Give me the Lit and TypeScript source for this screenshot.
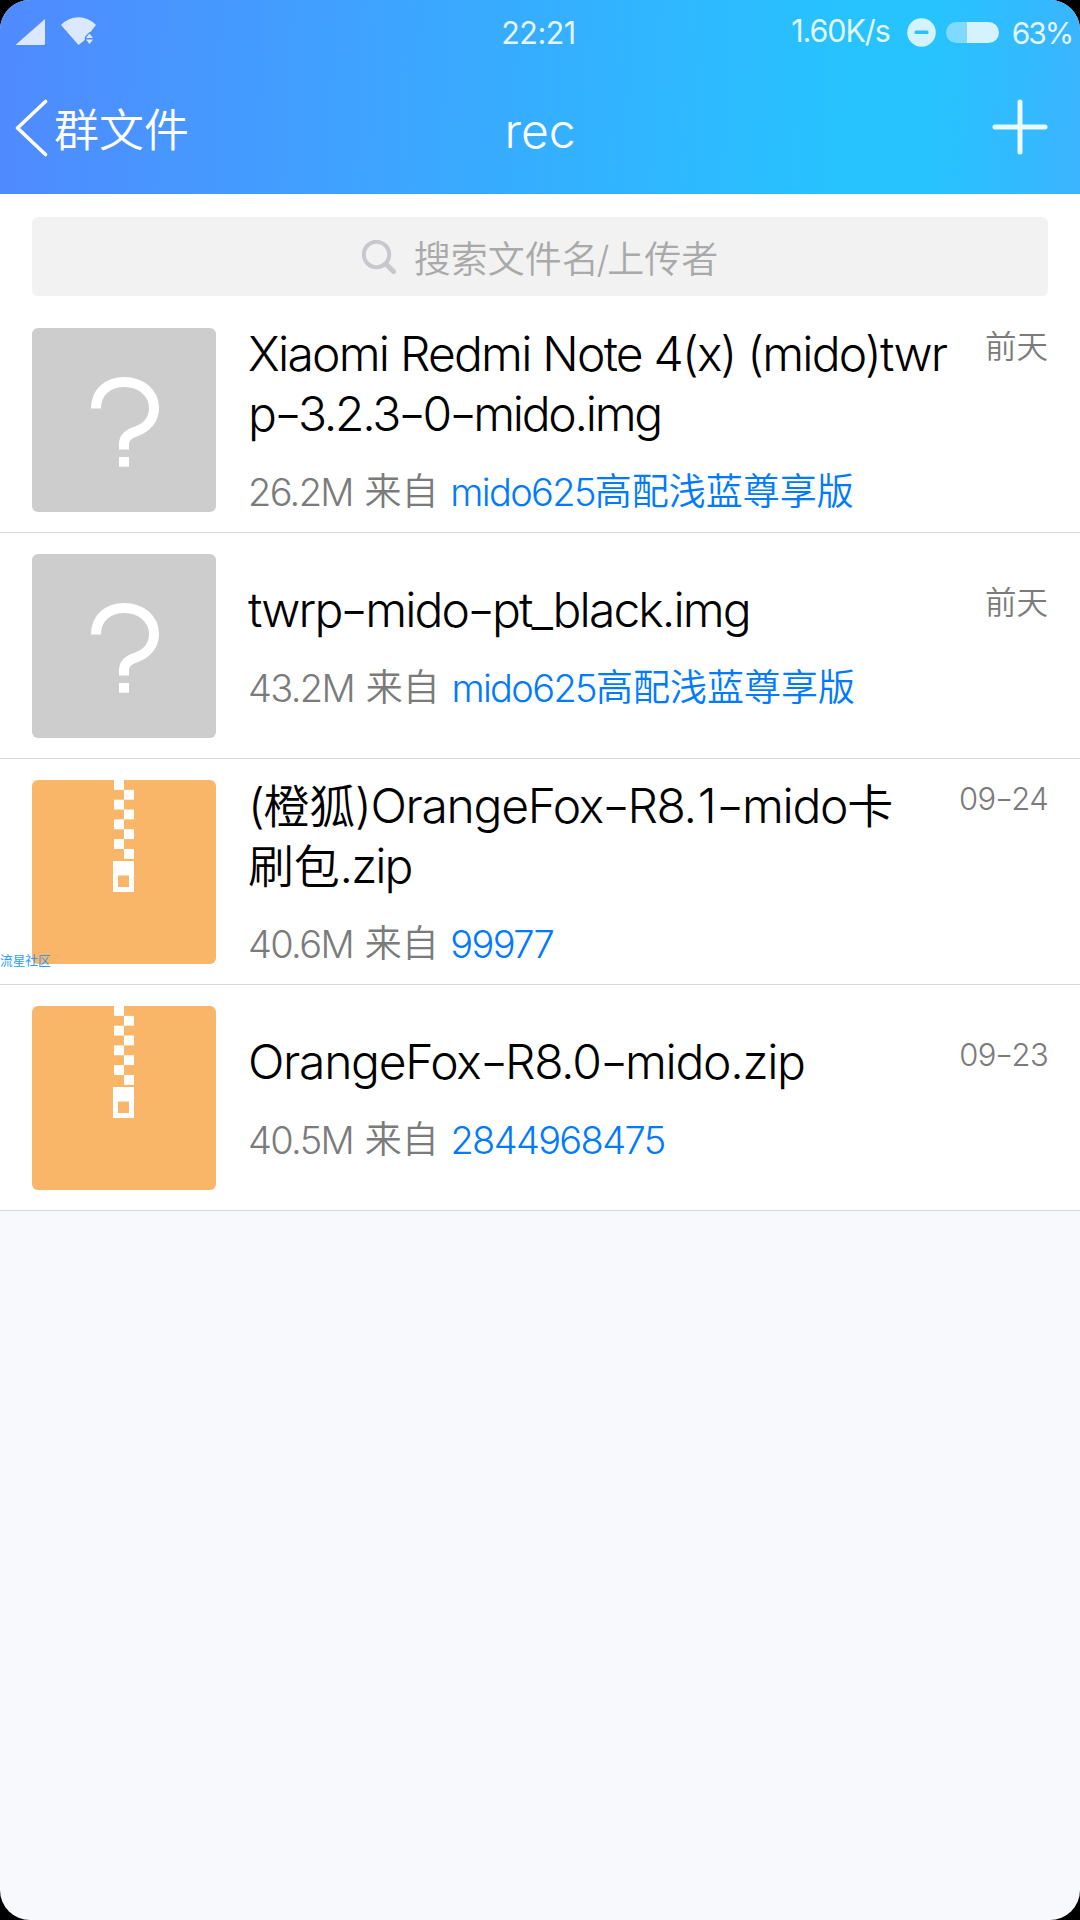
import { LitElement, html, css, svg } from "lit";
import { customElement, property } from "lit/decorators.js";
import { styleMap } from "lit/directives/style-map.js";

interface NameLine {
  text: string;
  /** letter spacing, px */
  tracking: number;
}

interface FileEntry {
  kind: "unknown" | "zip";
  lines: NameLine[];
  size: string;
  from: string;
  date: string;
}

const FILES: FileEntry[] = [
  {
    kind: "unknown",
    lines: [
      { text: "Xiaomi Redmi Note 4(x) (mido)twr", tracking: -1.78 },
      { text: "p-3.2.3-0-mido.img", tracking: -2.3 },
    ],
    size: "26.2M",
    from: "mido625高配浅蓝尊享版",
    date: "前天",
  },
  {
    kind: "unknown",
    lines: [{ text: "twrp-mido-pt_black.img", tracking: -1.9 }],
    size: "43.2M",
    from: "mido625高配浅蓝尊享版",
    date: "前天",
  },
  {
    kind: "zip",
    lines: [
      { text: "(橙狐)OrangeFox-R8.1-mido卡", tracking: -1.3 },
      { text: "刷包.zip", tracking: -2 },
    ],
    size: "40.6M",
    from: "99977",
    date: "09-24",
  },
  {
    kind: "zip",
    lines: [{ text: "OrangeFox-R8.0-mido.zip", tracking: -1.3 }],
    size: "40.5M",
    from: "2844968475",
    date: "09-23",
  },
];

const SPECIAL: Record<string, string> = { "-": "dash", "/": "slash", "1": "one" };

/** Wraps runs of Han characters, hyphens, slashes and the digit 1 in spans of their own. */
const runs = (text: string) =>
  text
    .split(/([\u4e00-\u9fff]+|-|\/|1)/)
    .filter((part) => part !== "")
    .map((part) => {
      const cls = SPECIAL[part] ?? (/[\u4e00-\u9fff]/.test(part) ? "han" : "");
      return cls ? html`<span class=${cls}>${part}</span>` : part;
    });

const teeth = Array.from({ length: 8 }, (_, i) =>
  svg`<rect x=${i % 2 ? 92 : 82} y=${i * 9.85} width="10" height="9.85"></rect>`,
);

@customElement("file-thumb")
class FileThumb extends LitElement {
  @property() kind = "unknown";

  static styles = css`
    :host { display: block; flex: none; width: 184px; height: 184px; }
    svg { display: block; border-radius: 6px; }
    .unknown { background: #cdcdcd; }
    .zip { background: #f9b568; }
  `;

  render() {
    return this.kind === "zip"
      ? html`<svg class="zip" width="184" height="184" viewBox="0 0 184 184" fill="#fff">
          ${teeth}
          <path fill-rule="evenodd" d="M81 81h21v31H81zM86 95.500v11.500h11v-11.500z"></path>
        </svg>`
      : html`<svg class="unknown" width="184" height="184" viewBox="0 0 184 184">
          <path d="M64 80.500C64 64 76 54 92.500 54S122 65 122 80C122 92 114 100 104 103.500C96 106 92 110 92 116V121.500" fill="none" stroke="#fff" stroke-width="10"></path>
          <rect x="87" y="129" width="10" height="9.700" fill="#fff"></rect>
        </svg>`;
  }
}

@customElement("file-row")
class FileRow extends LitElement {
  @property({ attribute: false }) file!: FileEntry;

  static styles = css`
    :host {
      display: flex; align-items: flex-start; gap: 32px; box-sizing: border-box; height: 226px;
      padding: 21px 32px 0; border-bottom: 1px solid #d9d9db; background: #fff;
    }
    .body { flex: 1; height: 182px; display: flex; flex-direction: column; justify-content: center; gap: 25px; white-space: nowrap; }
    .head { display: flex; justify-content: space-between; align-items: flex-start; }
    .name { font-size: 48px; line-height: 60px; font-weight: 300; color: #000; }
    .line { height: 60px; }
    .dash { display: inline-block; transform: scaleX(1.3); margin: 0 0.042em; }
    .one { margin: 0 0.042em; }
    .name .han { font-size: 46px; letter-spacing: -0.2px; line-height: 1; font-weight: 350; }
    .date { font-size: 31px; line-height: 40px; margin-top: 3px; color: #7b7b7b; font-weight: 300; letter-spacing: -0.7px; }
    .date .han { font-size: 31.500px; letter-spacing: 0; line-height: 1; font-weight: 350; }
    .meta { font-size: 38px; line-height: 46px; height: 46px; color: #7b7b7b; font-weight: 300; letter-spacing: -1.65px; word-spacing: 2.600px; }
    .meta .han { font-size: 37px; letter-spacing: 0; line-height: 1; font-weight: 350; vertical-align: 1px; }
    .from { color: #007aff; }
  `;

  render() {
    const f = this.file;
    return html`
      <file-thumb kind=${f.kind}></file-thumb>
      <div class="body">
        <div class="head">
          <div class="name">
            ${f.lines.map((l) => html`<div class="line" style=${styleMap({ letterSpacing: `${l.tracking}px` })}>${runs(l.text)}</div>`)}
          </div>
          <div class="date">${runs(f.date)}</div>
        </div>
        <div class="meta">${f.size} ${runs("来自")} <span class="from">${runs(f.from)}</span></div>
      </div>
    `;
  }
}

@customElement("app-root")
class AppRoot extends LitElement {
  static styles = css`
    :host { display: block; width: 1080px; height: 1920px; background: #000; font-family: Inter, "Noto Sans CJK SC", sans-serif; }
    .screen { position: relative; height: 1920px; overflow: hidden; border-radius: 30px; background: #f8f9fc; }
    .top { height: 194px; color: #fff; background: linear-gradient(93deg, #508aff 0%, #3fa2ff 33%, #34b0ff 52%, #27c3ff 78%, #27c3ff 86%, #3bb4ff 100%); }
    .status { display: grid; grid-template-columns: 1fr auto 1fr; align-items: center; height: 64px; color: rgba(255, 255, 255, 0.88); font-size: 30.500px; line-height: 40px; }
    .left { display: flex; gap: 16px; padding-left: 16px; }
    .clock { letter-spacing: -0.5px; margin-top: 1px; padding-right: 3px; }
    .right { display: flex; justify-content: flex-end; align-items: center; padding-right: 8px; }
    .speed { margin: -3px 17px 0 0; letter-spacing: -1.1px; }
    .dnd { margin-right: 10px; }
    .battery { margin-right: 13px; }
    .pct { font-size: 30px; letter-spacing: -2.1px; margin-top: 1px; }
    .nav { display: grid; grid-template-columns: 1fr auto 1fr; align-items: center; height: 126px; }
    .back { display: flex; align-items: center; gap: 6px; padding-left: 15px; font-size: 45px; font-weight: 350; }
    .chevron { margin-top: 2px; }
    .title { font-size: 48px; font-weight: 300; margin-top: 6px; }
    .plus { justify-self: end; margin-right: 32px; }
    .searchbar { box-sizing: border-box; height: 113px; padding: 23px 32px 0; background: #fff; }
    .search { display: flex; align-items: center; justify-content: center; gap: 18px; height: 79px; border-radius: 6px; background: #f2f2f2; color: #a9a9a9; font-size: 37px; font-weight: 350; }
    .slash { margin: 0 -2.200px; font-weight: 300; }
    .mark { position: absolute; left: 0; top: 952px; font-size: 12.700px; line-height: 18px; color: #2a9dff; }
    svg { display: block; }
  `;

  render() {
    return html`
      <div class="screen">
        <div class="top">
          <div class="status">
            <div class="left">
              <svg width="29" height="30" viewBox="16 16 29 30" fill="#fff" fill-opacity=".8"><path d="M16 43.500L45 18V42.500q0 1.500-1.500 1.500H16z"></path></svg>
              <svg width="36" height="30" viewBox="61 16 36 30" fill="#fff" fill-opacity=".8">
                <path d="M61 24Q68.500 16.200 78.500 16.200T96 24L90.500 31L89.500 31L84.800 36V39L78.500 44z"></path>
                <path d="M86 37l3.500-4.500L93 37zM86 38.500h7L89.500 43z"></path>
              </svg>
            </div>
            <div class="clock">22:21</div>
            <div class="right">
              <span class="speed">1.60K/s</span>
              <svg class="dnd" width="29" height="29" viewBox="0 0 29 29"><circle cx="14.500" cy="14.500" r="14.300" fill="#fff" fill-opacity=".8"></circle><rect x="7.500" y="12.500" width="14" height="3.600" rx="1.500" fill="#28c0ff"></rect></svg>
              <svg class="battery" width="53" height="21" viewBox="0 0 53 21" fill="#fff"><path fill-opacity=".4" d="M21 0H10.500a10.500 10.500 0 0 0 0 21H21z"></path><path fill-opacity=".8" d="M21 0h21.500a10.500 10.500 0 0 1 0 21H21z"></path></svg>
              <span class="pct">63%</span>
            </div>
          </div>
          <div class="nav">
            <div class="back">
              <svg class="chevron" width="33" height="58" viewBox="15 99 33 58" fill="none" stroke="#fff" stroke-width="3.600" stroke-linecap="round" stroke-linejoin="round"><path d="M45.500 101.500L17.500 128L45.500 154.500"></path></svg>
              <span>群文件</span>
            </div>
            <div class="title">rec</div>
            <svg class="plus" width="56" height="56" viewBox="0 0 56 56" stroke="#fff" stroke-opacity=".9" stroke-width="5" stroke-linecap="round"><path d="M28 3V53M3 28H53"></path></svg>
          </div>
        </div>
        <div class="searchbar">
          <div class="search">
            <svg width="34" height="34" viewBox="0 0 34 34" fill="none" stroke="#c8c7ce" stroke-width="4" stroke-linecap="round"><circle cx="14.500" cy="14.500" r="12.700"></circle><path d="M24.500 24.500L31.500 31.500" stroke-width="5"></path></svg>
            <span>${runs("搜索文件名/上传者")}</span>
          </div>
        </div>
        ${FILES.map((f) => html`<file-row .file=${f}></file-row>`)}
        <div class="mark">流星社区</div>
      </div>
    `;
  }
}
